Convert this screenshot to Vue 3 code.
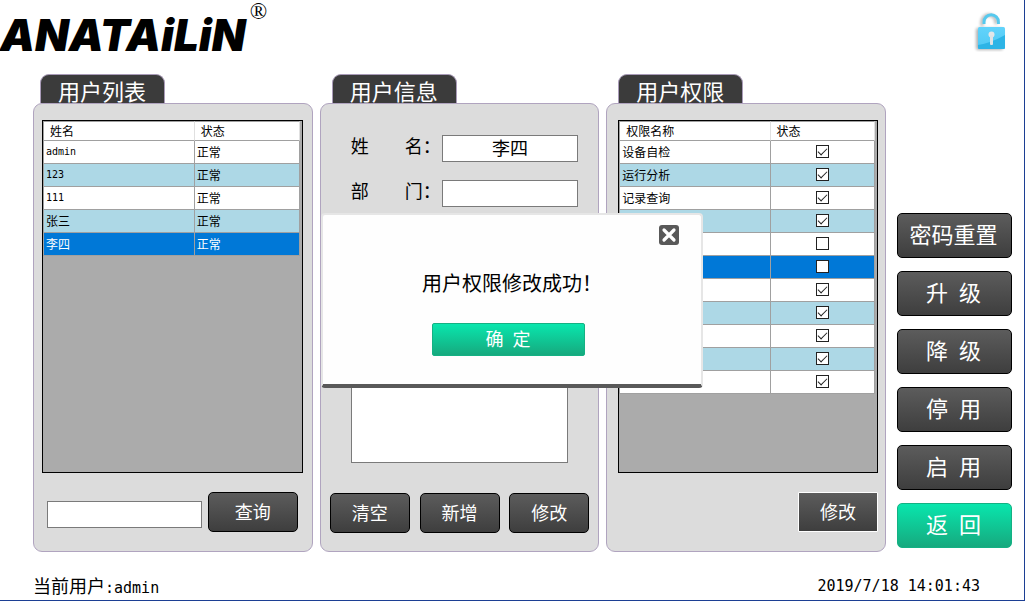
<script setup>
import { ref } from 'vue'

const users = [
  { name: 'admin', status: '正常' },
  { name: '123', status: '正常' },
  { name: '111', status: '正常' },
  { name: '张三', status: '正常' },
  { name: '李四', status: '正常' }
]
const selectedUser = ref(4)
const isLatin = (text) => /^\w+$/.test(text)

const permissions = ref([
  { name: '设备自检', on: true },
  { name: '运行分析', on: true },
  { name: '记录查询', on: true },
  { name: '', on: true },
  { name: '', on: false },
  { name: '', on: false },
  { name: '', on: true },
  { name: '', on: true },
  { name: '', on: true },
  { name: '', on: true },
  { name: '', on: true }
])
const selectedPermission = ref(5)

const actions = ['密码重置', '升\u2002级', '降\u2002级', '停\u2002用', '启\u2002用']
const keyword = ref('')
const userName = ref('李四')
const department = ref('')
const remark = ref('')
const dialogOpen = ref(true)
</script>

<template>
  <div class="page">
    <header class="header">
      <div class="brand"><span class="brand-name">ANATAiLiN</span><span class="brand-mark">®</span></div>
      <svg class="lock" viewBox="0 0 40 44" width="40" height="44" aria-hidden="true">
        <defs>
          <linearGradient id="lockBody" x1="0" y1="0" x2="0" y2="1">
            <stop offset="0" stop-color="#62d3fb" />
            <stop offset="1" stop-color="#4fc8f4" />
          </linearGradient>
          <filter id="lockShadow" x="-30%" y="-30%" width="160%" height="160%">
            <feGaussianBlur stdDeviation="1.6" />
          </filter>
        </defs>
        <g filter="url(#lockShadow)" opacity="0.3">
          <rect x="4" y="20" width="27" height="22" rx="2" />
          <path d="M10 18v-4a7 7 0 0 1 14 0v2" fill="none" stroke="#000" stroke-width="3" />
        </g>
        <path d="M12 16v-2a7.200 7.200 0 0 1 14.400 0v2" fill="none" stroke="#56c9ee" stroke-width="3" />
        <rect x="6" y="19" width="27" height="22" rx="1.500" fill="url(#lockBody)" />
        <path d="M6 37Q19 35 33 27V39.500a1.500 1.500 0 0 1-1.500 1.500H7.500A1.500 1.500 0 0 1 6 39.500Z" fill="#2db4e6" />
        <circle cx="19.500" cy="26.500" r="3" fill="#e4e6e8" />
        <rect x="18" y="27" width="3" height="10" rx="1" fill="#dfe3e6" />
      </svg>
    </header>

    <main class="main">
      <section class="panel">
        <h2 class="tab">用户列表</h2>
        <div class="panel-body">
          <div class="grid-box">
            <table class="grid">
              <thead>
                <tr><th class="col-name">姓名</th><th>状态</th></tr>
              </thead>
              <tbody>
                <tr v-for="(u, i) in users" :key="u.name" :class="{ selected: i === selectedUser }" @click="selectedUser = i">
                  <td :class="{ latin: isLatin(u.name) }">{{ u.name }}</td>
                  <td>{{ u.status }}</td>
                </tr>
              </tbody>
            </table>
          </div>
          <div class="actions search">
            <input v-model="keyword" class="field" type="text" aria-label="查询">
            <button class="btn btn-search" type="button">查询</button>
          </div>
        </div>
      </section>

      <section class="panel">
        <h2 class="tab tab-inset">用户信息</h2>
        <div class="panel-body">
          <div class="form">
            <div class="form-row">
              <label for="user-name">姓&emsp;&emsp;名：</label>
              <input id="user-name" v-model="userName" class="field" type="text">
            </div>
            <div class="form-row">
              <label for="user-dept">部&emsp;&emsp;门：</label>
              <input id="user-dept" v-model="department" class="field" type="text">
            </div>
            <textarea v-model="remark" class="remark" aria-label="备注"></textarea>
          </div>
          <div class="actions triple">
            <button class="btn" type="button">清空</button>
            <button class="btn" type="button">新增</button>
            <button class="btn" type="button">修改</button>
          </div>
        </div>
      </section>

      <section class="panel">
        <h2 class="tab tab-inset">用户权限</h2>
        <div class="panel-body panel-rights">
          <div class="grid-box">
            <table class="grid">
              <thead>
                <tr><th class="col-name">权限名称</th><th>状态</th></tr>
              </thead>
              <tbody>
                <tr v-for="(p, i) in permissions" :key="i" :class="{ selected: i === selectedPermission }" @click="selectedPermission = i">
                  <td>{{ p.name }}</td>
                  <td class="check-cell"><input v-model="p.on" class="check" type="checkbox" :aria-label="p.name || '状态'"></td>
                </tr>
              </tbody>
            </table>
          </div>
          <div class="actions single">
            <button class="btn btn-focus" type="button">修改</button>
          </div>
        </div>
      </section>

      <nav class="side">
        <button v-for="a in actions" :key="a" class="btn btn-side" type="button">{{ a }}</button>
        <button class="btn btn-side btn-green" type="button">返&ensp;回</button>
      </nav>
    </main>

    <footer class="footer">
      <span>当前用户<span class="mono">:admin</span></span>
      <time class="mono" datetime="2019-07-18T14:01:43">2019/7/18 14:01:43</time>
    </footer>

    <div v-if="dialogOpen" class="overlay">
      <div class="dialog" role="dialog" aria-labelledby="dialog-text">
        <button class="close" type="button" aria-label="关闭" @click="dialogOpen = false">
          <svg viewBox="0 0 20 20" width="20" height="20">
            <rect width="20" height="20" rx="3" fill="#595959" />
            <path d="M5 5L15 15M15 5L5 15" stroke="#fff" stroke-width="3.200" stroke-linecap="round" />
          </svg>
        </button>
        <p id="dialog-text" class="message">用户权限修改成功！</p>
        <button class="btn btn-green btn-ok" type="button" @click="dialogOpen = false">确&ensp;定</button>
      </div>
    </div>
  </div>
</template>

<style>
body {
  margin: 0;
}
</style>

<style scoped>
.page {
  position: relative;
  box-sizing: border-box;
  min-height: 100vh;
  display: flex;
  flex-direction: column;
  border-right: 1px solid #1c3f94;
  border-bottom: 1px solid #1c3f94;
  background: #fff;
  color: #000;
  font-family: "Noto Sans CJK SC", sans-serif;
  font-size: 18px;
  line-height: 24px;
}
.page *,
.page *::before {
  box-sizing: border-box;
}
.mono {
  font-family: "DejaVu Sans Mono", monospace;
  font-size: 15px;
}
.header {
  height: 74px;
  display: flex;
  justify-content: space-between;
  padding: 0 12px 0 0;
}
.brand {
  display: flex;
  align-items: flex-start;
  gap: 4px;
}
.brand-name {
  padding-top: 12px;
  font: italic 900 44px/46px Inter, "Liberation Sans", sans-serif;
}
.brand-mark {
  font: 23px/24px "Liberation Serif", serif;
}
.lock {
  margin-top: 8px;
}
.main {
  flex: 1;
  display: flex;
  gap: 7px;
  padding: 0 12px 0 33px;
}
.panel {
  flex: 1;
  min-width: 0;
  display: flex;
  flex-direction: column;
}
.tab {
  align-self: flex-start;
  width: 125px;
  height: 29px;
  margin: 0 0 0 7px;
  padding: 0 0 0 17px;
  border: 1px solid #a99bb8;
  border-bottom: 0;
  border-radius: 9px 9px 0 0;
  background: #3b3b3b;
  color: #fff;
  font-size: 22px;
  font-weight: 400;
  line-height: 30px;
}
.tab-inset {
  margin-left: 12px;
}
.panel-body {
  flex: 1;
  display: flex;
  flex-direction: column;
  padding: 16px 9px 18px 8px;
  border: 1px solid #b0a4bf;
  border-radius: 9px;
  background: #dcdcdc;
}
.panel-rights {
  padding-left: 11px;
  padding-right: 7px;
}
.grid-box {
  flex: 1;
  border: 1px solid #000;
  background: #ababab;
}
.grid {
  width: calc(100% - 2px);
  table-layout: fixed;
  border-collapse: separate;
  border-spacing: 0;
  border-left: 1px solid #a0a0a0;
  font-size: 12px;
  line-height: 16px;
}
.grid th {
  height: 20px;
  padding: 0 0 0 6px;
  border-top: 1px solid #a0a0a0;
  border-right: 1px solid #e0e0e0;
  border-bottom: 1px solid #a0a0a0;
  background: #fff;
  font-weight: 400;
  text-align: left;
}
.grid .col-name {
  width: 59%;
}
.grid td {
  height: 23px;
  padding: 0 0 0 2px;
  border-right: 1px solid #a0a0a0;
  border-bottom: 1px solid #a0a0a0;
  background: #fff;
}
.grid .latin {
  font-family: "DejaVu Sans Mono", monospace;
  font-size: 10px;
}
.grid tr:nth-child(even) td {
  background: #add8e6;
}
.grid tr.selected td {
  background: #0078d7;
  color: #fff;
}
.grid .check-cell {
  padding: 0 0 2px;
  text-align: center;
}
.check {
  appearance: none;
  display: block;
  width: 13px;
  height: 13px;
  margin: 0 auto;
  border: 1px solid #222;
  background: #fff;
}
.check:checked::before {
  content: "";
  display: block;
  width: 9px;
  height: 5px;
  margin: 2px 0 0 1px;
  border-left: 1px solid #222;
  border-bottom: 1px solid #222;
  transform: rotate(-45deg);
}
.actions {
  display: flex;
  align-items: center;
  margin-top: 19px;
}
.search {
  gap: 6px;
  padding: 0 5px;
}
.search .field {
  margin-top: 5px;
}
.search,
.single {
  margin-bottom: 1px;
}
.field {
  flex: 1;
  min-width: 0;
  height: 27px;
  padding: 0 4px 4px;
  border: 1px solid #7a7a7a;
  background: #fff;
  color: #000;
  font: inherit;
}
.form {
  flex: 1;
  display: flex;
  flex-direction: column;
  gap: 18px;
  padding: 15px 11px 11px 22px;
}
.form-row {
  display: flex;
  align-items: center;
}
.form-row label {
  width: 91px;
  padding-bottom: 6px;
  line-height: 21px;
  white-space: nowrap;
}
.form-row .field {
  text-align: center;
}
.remark {
  flex: 1;
  margin: 60px 10px 0 0;
  border: 1px solid #7a7a7a;
  background: #fff;
  font: inherit;
  resize: none;
}
.triple {
  justify-content: space-between;
  padding-left: 1px;
}
.single {
  justify-content: flex-end;
}
.btn {
  width: 80px;
  height: 40px;
  padding: 0 0 3px;
  border: 1px solid #000;
  border-radius: 5px;
  background: linear-gradient(#5c5c5c, #3e3e3e);
  color: #fff;
  font: inherit;
  white-space: nowrap;
}
.btn-search {
  width: 90px;
}
.btn-focus {
  border-color: #fff;
  border-radius: 1px;
}
.side {
  display: flex;
  flex-direction: column;
  gap: 13px;
  width: 119px;
  padding: 139px 0 0 4px;
}
.btn-side {
  width: 115px;
  height: 45px;
  padding: 0 2px 5px 0;
  font-size: 22px;
}
.btn-green {
  border-color: #14b183;
  background: linear-gradient(#09e6ad, #16a97e);
}
.footer {
  display: flex;
  justify-content: space-between;
  height: 48px;
  padding: 21px 44px 0 33px;
}
.footer time {
  line-height: 26px;
}
.overlay {
  position: absolute;
  inset: 0;
  display: flex;
  align-items: center;
  justify-content: center;
}
.dialog {
  position: relative;
  display: flex;
  flex-direction: column;
  align-items: center;
  width: 382px;
  height: 175px;
  padding-top: 55px;
  border: 2px solid #e6e6e6;
  border-bottom: 4px solid #595959;
  border-radius: 4px;
  background: #fefefe;
}
.message {
  margin: 0;
  font-size: 20px;
  line-height: 26px;
}
.btn-ok {
  width: 153px;
  height: 33px;
  margin: 27px 8px 0 0;
  border-radius: 2px;
}
.close {
  position: absolute;
  top: 10px;
  right: 22px;
  width: 20px;
  height: 20px;
  padding: 0;
  border: 0;
  background: none;
}
.close svg {
  display: block;
}
</style>
